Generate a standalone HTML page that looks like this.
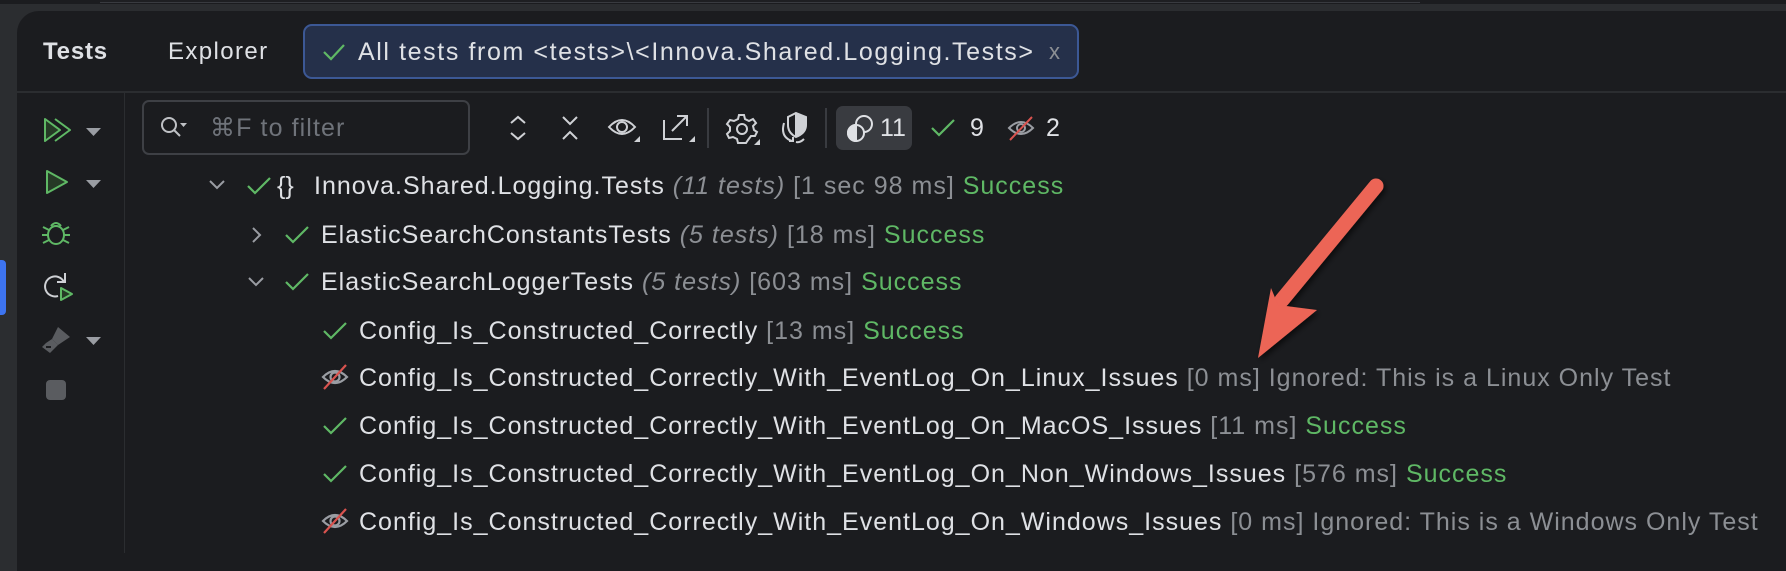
<!DOCTYPE html>
<html><head><meta charset="utf-8"><style>
*{margin:0;padding:0;box-sizing:border-box}
body{width:1786px;height:548px;background:#2b2d30;overflow:hidden;position:relative;font-family:"Liberation Sans",sans-serif;color:#dfe1e5}
.abs{position:absolute}
.panel{left:17px;top:11px;width:1800px;height:560px;background:#1b1c1f;border-top-left-radius:22px}
.t{position:absolute;font-size:25px;letter-spacing:1px;white-space:nowrap;line-height:30px}
.g{color:#8c8f94}.s{color:#5fb865}.i{font-style:italic;color:#8c8f94}
svg{position:absolute;overflow:visible}
</style></head><body>
<div class="abs" style="left:0;top:0;width:1786px;height:4px;background:#1b1c1f"></div>
<div class="abs" style="left:100px;top:0;width:1320px;height:3px;background:#1e1f22;border-bottom:1px solid #393b40"></div>
<div class="abs panel"></div>
<div class="abs" style="left:0;top:260px;width:6px;height:55px;background:#3d74f0;border-radius:0 4px 4px 0"></div>

<!-- tabs -->
<div class="t" style="left:43px;top:37px;font-size:24px;font-weight:bold;letter-spacing:0.8px">Tests</div>
<div class="t" style="left:168px;top:37px;font-size:24px;letter-spacing:1.4px">Explorer</div>
<div class="abs" style="left:303px;top:24px;width:776px;height:55px;background:#25304a;border:2px solid #3c5895;border-radius:9px"></div>
<svg style="left:322px;top:43px" width="24" height="18"><path d="M2 9 L9 16 L22 2" fill="none" stroke="#5fb865" stroke-width="2.2"/></svg>
<div class="t" style="left:358px;top:37px;font-size:25px;letter-spacing:1.6px">All tests from &lt;tests&gt;\&lt;Innova.Shared.Logging.Tests&gt;</div>
<div class="t" style="left:1049px;top:37px;font-size:22px;color:#8c8f94">x</div>
<div class="abs" style="left:17px;top:91px;width:1786px;height:2px;background:#2b2d30"></div>
<div class="abs" style="left:124px;top:93px;width:1px;height:460px;background:#2b2d30"></div>

<!-- sidebar -->
<svg style="left:40px;top:117px" width="40" height="28"><path d="M5 2 L20 13 L5 24 Z" fill="#263a26" stroke="#5fb865" stroke-width="2" stroke-linejoin="round"/><path d="M15 2 L30 13 L15 24" fill="none" stroke="#5fb865" stroke-width="2" stroke-linejoin="round"/></svg>
<svg style="left:85px;top:127px" width="18" height="10"><path d="M1 1 L16 1 L8.5 9Z" fill="#9a9da3"/></svg>
<svg style="left:44px;top:169px" width="28" height="28"><path d="M3 2 L23 13 L3 24 Z" fill="#263a26" stroke="#5fb865" stroke-width="2" stroke-linejoin="round"/></svg>
<svg style="left:85px;top:179px" width="18" height="10"><path d="M1 1 L16 1 L8.5 9Z" fill="#9a9da3"/></svg>
<svg style="left:40px;top:219px" width="32" height="28" fill="none" stroke="#5fb865" stroke-width="2"><ellipse cx="16" cy="16" rx="8" ry="9"/><path d="M11 7 Q16 1 21 7 M2 16 H8 M24 16 H30 M3 8 L9 11 M29 8 L23 11 M3 24 L9 21 M29 24 L23 21"/></svg>
<svg style="left:42px;top:270px" width="34" height="34" fill="none" stroke-width="2"><path d="M22 12 A10 10 0 1 0 16 26" stroke="#cfd1d5"/><path d="M23 3 V12 H15" stroke="#cfd1d5"/><path d="M19 18 L30 24 L19 30 Z" fill="#263a26" stroke="#5fb865" stroke-linejoin="round"/></svg>
<svg style="left:40px;top:325px" width="32" height="30"><path d="M18 2 L30 12 L18 20 L12 14 Z" fill="#5a5c60"/><path d="M6 18 L12 14 L18 20 L10 28 L2 22Z" fill="#5a5c60"/><path d="M6 22 H11" stroke="#1b1c1f" stroke-width="2"/></svg>
<svg style="left:85px;top:336px" width="18" height="10"><path d="M1 1 L16 1 L8.5 9Z" fill="#9a9da3"/></svg>
<div class="abs" style="left:46px;top:380px;width:20px;height:20px;background:#5a5c60;border-radius:4px"></div>

<!-- filter -->
<div class="abs" style="left:142px;top:100px;width:328px;height:55px;border:2px solid #3e4045;border-radius:7px"></div>
<svg style="left:160px;top:115px" width="30" height="28" fill="none" stroke="#bfc1c5" stroke-width="2"><circle cx="9" cy="10" r="7"/><path d="M14 15 L20 21"/><path d="M20 8 L27 8 L23.5 12Z" fill="#bfc1c5" stroke="none"/></svg>
<div class="t" style="left:210px;top:113px;color:#6f737a;letter-spacing:1.1px">⌘F to filter</div>

<!-- toolbar icons -->
<svg style="left:508px;top:115px" width="20" height="28" fill="none" stroke="#cfd1d5" stroke-width="2"><path d="M3 8 L10 2 L17 8 M3 18 L10 24 L17 18"/></svg>
<svg style="left:560px;top:115px" width="20" height="28" fill="none" stroke="#cfd1d5" stroke-width="2"><path d="M3 2 L10 9 L17 2 M3 24 L10 17 L17 24"/></svg>
<svg style="left:607px;top:114px" width="34" height="28" fill="none" stroke="#cfd1d5" stroke-width="2"><path d="M2 13 Q15 -1 28 13 Q15 27 2 13Z"/><circle cx="15" cy="13" r="5"/><path d="M27 28 L33 28 L33 22Z" fill="#cfd1d5" stroke="none"/></svg>
<svg style="left:662px;top:112px" width="34" height="32" fill="none" stroke="#cfd1d5" stroke-width="2"><path d="M2 8 V27 H20"/><path d="M10 19 L24 5 M15 4 H25 V14"/><path d="M27 30 L33 30 L33 24Z" fill="#cfd1d5" stroke="none"/></svg>
<div class="abs" style="left:707px;top:108px;width:2px;height:40px;background:#393b40"></div>
<svg style="left:725px;top:113px" width="36" height="34" fill="none" stroke="#cfd1d5" stroke-width="2"><path d="M14 2 H19 L20 6 L24 8 L28 6 L31 10 L28 13 L29 17 L32 19 L30 23 L26 23 L23 27 L21 30 H13 L12 26 L8 24 L4 25 L2 21 L5 18 V14 L2 11 L5 7 L9 8 L13 6Z"/><circle cx="17" cy="16" r="5"/><path d="M29 32 L35 32 L35 26Z" fill="#cfd1d5" stroke="none"/></svg>
<svg style="left:778px;top:111px" width="34" height="34" fill="none" stroke="#cfd1d5" stroke-width="2"><path d="M18 2 L28 6 V14 Q28 22 18 26 Q10 22 10 14 V6Z"/><path d="M18 3 V25 L20 24 Q27 20 27 14 V6Z" fill="#cfd1d5"/><path d="M6 12 Q2 26 14 30 M11 30 H15 V26"/><path d="M26 28 Q22 32 18 31"/></svg>
<div class="abs" style="left:825px;top:108px;width:2px;height:40px;background:#393b40"></div>
<div class="abs" style="left:836px;top:106px;width:76px;height:44px;background:#393b40;border-radius:7px"></div>
<svg style="left:846px;top:114px" width="32" height="30" fill="none" stroke="#dfe1e5" stroke-width="2"><circle cx="18" cy="10" r="8"/><circle cx="10" cy="19" r="8" fill="#393b40"/><path d="M10 11 A8 8 0 0 0 10 27Z" fill="#dfe1e5"/></svg>
<div class="t" style="left:880px;top:113px;letter-spacing:0">11</div>
<svg style="left:930px;top:118px" width="26" height="20"><path d="M2 10 L9 17 L24 2" fill="none" stroke="#5fb865" stroke-width="2.2"/></svg>
<div class="t" style="left:970px;top:113px;letter-spacing:0">9</div>
<svg style="left:1006px;top:114px" width="32" height="30" fill="none" stroke="#9a9da3" stroke-width="2"><path d="M3 14 Q15 2 27 14 Q15 26 3 14Z"/><circle cx="15" cy="14" r="4"/><path d="M4 26 L26 3" stroke="#d9534f"/></svg>
<div class="t" style="left:1046px;top:113px;letter-spacing:0">2</div>

<!-- tree -->
<svg style="left:208px;top:178px" width="18" height="14"><path d="M2 3 L9 10 L16 3" fill="none" stroke="#9a9da3" stroke-width="2"/></svg>
<svg style="left:246px;top:176px" width="26" height="20"><path d="M2 10 L9 17 L24 2" fill="none" stroke="#5fb865" stroke-width="2.2"/></svg>
<div class="t" style="left:277px;top:171px;letter-spacing:0">{}</div>
<div class="t" style="left:314px;top:171px">Innova.Shared.Logging.Tests <span class="i">(11 tests)</span> <span class="g">[1 sec 98 ms]</span> <span class="s">Success</span></div>

<svg style="left:250px;top:226px" width="14" height="18"><path d="M3 2 L10 9 L3 16" fill="none" stroke="#9a9da3" stroke-width="2"/></svg>
<svg style="left:284px;top:225px" width="26" height="20"><path d="M2 10 L9 17 L24 2" fill="none" stroke="#5fb865" stroke-width="2.2"/></svg>
<div class="t" style="left:321px;top:220px">ElasticSearchConstantsTests <span class="i">(5 tests)</span> <span class="g">[18 ms]</span> <span class="s">Success</span></div>

<svg style="left:247px;top:275px" width="18" height="14"><path d="M2 3 L9 10 L16 3" fill="none" stroke="#9a9da3" stroke-width="2"/></svg>
<svg style="left:284px;top:272px" width="26" height="20"><path d="M2 10 L9 17 L24 2" fill="none" stroke="#5fb865" stroke-width="2.2"/></svg>
<div class="t" style="left:321px;top:267px">ElasticSearchLoggerTests <span class="i">(5 tests)</span> <span class="g">[603 ms]</span> <span class="s">Success</span></div>

<svg style="left:322px;top:321px" width="26" height="20"><path d="M2 10 L9 17 L24 2" fill="none" stroke="#5fb865" stroke-width="2.2"/></svg>
<div class="t" style="left:359px;top:316px">Config_Is_Constructed_Correctly <span class="g">[13 ms]</span> <span class="s">Success</span></div>

<svg style="left:321px;top:364px" width="30" height="28" fill="none" stroke="#9a9da3" stroke-width="2.2"><path d="M2 13 Q14 1 26 13 Q14 25 2 13Z"/><circle cx="14" cy="13" r="4.5"/><path d="M3 25 L25 1" stroke="#d9534f"/></svg>
<div class="t" style="left:359px;top:363px">Config_Is_Constructed_Correctly_With_EventLog_On_Linux_Issues <span class="g">[0 ms] Ignored: This is a Linux Only Test</span></div>

<svg style="left:322px;top:416px" width="26" height="20"><path d="M2 10 L9 17 L24 2" fill="none" stroke="#5fb865" stroke-width="2.2"/></svg>
<div class="t" style="left:359px;top:411px">Config_Is_Constructed_Correctly_With_EventLog_On_MacOS_Issues <span class="g">[11 ms]</span> <span class="s">Success</span></div>

<svg style="left:322px;top:464px" width="26" height="20"><path d="M2 10 L9 17 L24 2" fill="none" stroke="#5fb865" stroke-width="2.2"/></svg>
<div class="t" style="left:359px;top:459px">Config_Is_Constructed_Correctly_With_EventLog_On_Non_Windows_Issues <span class="g">[576 ms]</span> <span class="s">Success</span></div>

<svg style="left:321px;top:508px" width="30" height="28" fill="none" stroke="#9a9da3" stroke-width="2.2"><path d="M2 13 Q14 1 26 13 Q14 25 2 13Z"/><circle cx="14" cy="13" r="4.5"/><path d="M3 25 L25 1" stroke="#d9534f"/></svg>
<div class="t" style="left:359px;top:507px">Config_Is_Constructed_Correctly_With_EventLog_On_Windows_Issues <span class="g">[0 ms] Ignored: This is a Windows Only Test</span></div>

<!-- arrow -->
<svg style="left:0;top:0" width="1786" height="548">
<defs><filter id="sh" x="-20%" y="-20%" width="140%" height="140%"><feDropShadow dx="2" dy="3" stdDeviation="3" flood-color="#000" flood-opacity="0.6"/></filter></defs>
<g filter="url(#sh)" fill="#ec6556">
<path d="M1376 186 L1282 300" stroke="#ec6556" stroke-width="15" stroke-linecap="round"/>
<path d="M1258 358 L1271 288 L1278 305 L1317 310 Z"/>
</g>
</svg>
</body></html>
